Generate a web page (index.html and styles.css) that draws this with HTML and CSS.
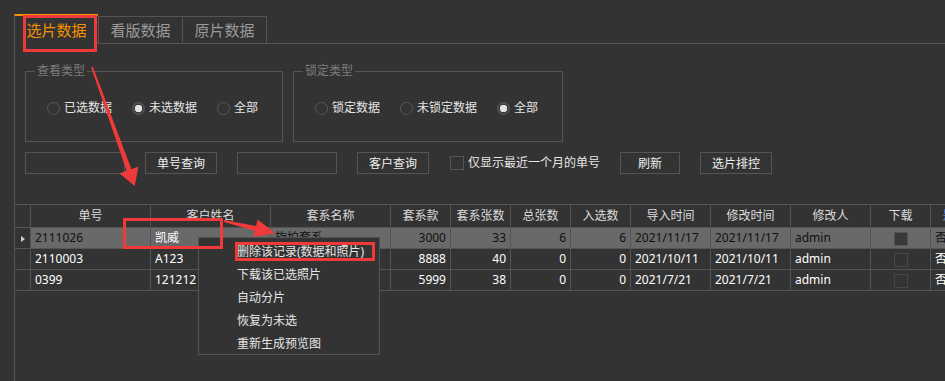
FILE: index.html
```html
<!DOCTYPE html>
<html lang="zh-CN">

<head>
    <meta charset="UTF-8">
    <title>选片数据</title>
    <link rel="stylesheet" href="styles.css">
</head>

<body>
    <div class="tabs">
        <div class="tab active">选片数据</div>
        <div class="tab">看版数据</div>
        <div class="tab last">原片数据</div>
        <div class="tab-fill"></div>
    </div>

    <div class="panel">
        <div class="groups">
            <div class="group g1">
                <div class="group-title">查看类型</div>
                <div class="radios">
                    <label class="radio"><span class="dot"></span>已选数据</label>
                    <label class="radio"><span class="dot on"></span>未选数据</label>
                    <label class="radio"><span class="dot"></span>全部</label>
                </div>
            </div>
            <div class="group g2">
                <div class="group-title">锁定类型</div>
                <div class="radios">
                    <label class="radio"><span class="dot"></span>锁定数据</label>
                    <label class="radio"><span class="dot"></span>未锁定数据</label>
                    <label class="radio"><span class="dot on"></span>全部</label>
                </div>
            </div>
        </div>

        <div class="controls">
            <input class="field" type="text">
            <button class="btn">单号查询</button>
            <input class="field" type="text">
            <button class="btn">客户查询</button>
            <label class="check"><span class="box"></span>仅显示最近一个月的单号</label>
            <button class="btn short">刷新</button>
            <button class="btn">选片排控</button>
        </div>

        <div class="grid-wrap">
            <table class="grid">
                <colgroup>
                    <col style="width:16px">
                    <col style="width:120px">
                    <col style="width:120px">
                    <col style="width:120px">
                    <col style="width:60px">
                    <col style="width:60px">
                    <col style="width:60px">
                    <col style="width:60px">
                    <col style="width:80px">
                    <col style="width:80px">
                    <col style="width:80px">
                    <col style="width:60px">
                    <col style="width:72px">
                </colgroup>
                <thead>
                    <tr>
                        <th></th>
                        <th>单号</th>
                        <th>客户姓名</th>
                        <th>套系名称</th>
                        <th>套系款</th>
                        <th>套系张数</th>
                        <th>总张数</th>
                        <th>入选数</th>
                        <th>导入时间</th>
                        <th>修改时间</th>
                        <th>修改人</th>
                        <th>下载</th>
                        <th class="blue">是否锁定</th>
                    </tr>
                </thead>
                <tbody>
                    <tr class="sel">
                        <td class="rowhead"><span class="marker"></span></td>
                        <td>2111026</td>
                        <td class="current">凯威</td>
                        <td>旋拍套系</td>
                        <td class="num">3000</td>
                        <td class="num">33</td>
                        <td class="num">6</td>
                        <td class="num">6</td>
                        <td>2021/11/17</td>
                        <td>2021/11/17</td>
                        <td>admin</td>
                        <td class="mid"><span class="cb filled"></span></td>
                        <td>否</td>
                    </tr>
                    <tr>
                        <td class="rowhead"></td>
                        <td>2110003</td>
                        <td>A123</td>
                        <td></td>
                        <td class="num">8888</td>
                        <td class="num">40</td>
                        <td class="num">0</td>
                        <td class="num">0</td>
                        <td>2021/10/11</td>
                        <td>2021/10/11</td>
                        <td>admin</td>
                        <td class="mid"><span class="cb"></span></td>
                        <td>否</td>
                    </tr>
                    <tr>
                        <td class="rowhead"></td>
                        <td>0399</td>
                        <td>121212</td>
                        <td></td>
                        <td class="num">5999</td>
                        <td class="num">38</td>
                        <td class="num">0</td>
                        <td class="num">0</td>
                        <td>2021/7/21</td>
                        <td>2021/7/21</td>
                        <td>admin</td>
                        <td class="mid"><span class="cb"></span></td>
                        <td>否</td>
                    </tr>
                </tbody>
            </table>
        </div>
    </div>

    <!-- right-click menu on the selected row -->
    <ul class="ctx-menu">
        <li>删除该记录(数据和照片)</li>
        <li>下载该已选照片</li>
        <li>自动分片</li>
        <li>恢复为未选</li>
        <li>重新生成预览图</li>
    </ul>

    <!-- red screenshot annotations -->
    <svg class="marks" width="945" height="381" viewBox="0 0 945 381">
        <g fill="none" stroke="#f03a3a" stroke-width="3">
            <rect x="24.5" y="16.5" width="71" height="34" />
            <rect x="124.5" y="219.5" width="97" height="28" />
            <rect x="236.5" y="243.5" width="137" height="16" />
        </g>
        <g fill="#f03a3a">
            <polygon points="92.9,66.7 131.4,169.2 138.4,166.6 134.7,186 119.6,173.4 126.6,170.8 91.1,67.3" />
            <polygon points="224.2,220 256.1,226 257.6,219.6 275,233 253.4,237.2 254.9,230.8 223.8,222" />
        </g>
    </svg>
</body>

</html>
```

FILE: styles.css
```css
html,
body {
    margin: 0;
    height: 100%;
}

body {
    background: #333333;
    color: #e6e6e6;
    font-family: 'Noto Sans', 'Noto Sans CJK SC', sans-serif;
    font-size: 12px;
    line-height: 16px;
    display: flex;
    flex-direction: column;
    overflow: hidden;
    position: relative;
}

/* Tabs */
.tabs {
    display: flex;
    align-items: flex-end;
    padding: 14px 0 0 14px;
}

.tab {
    box-sizing: border-box;
    width: 84px;
    height: 28px;
    border-top: 1px solid #555;
    border-left: 1px solid #555;
    border-bottom: 1px solid #555;
    color: #9a9a9a;
    font-size: 15px;
    line-height: 26px;
    text-align: center;
}

.tab.active {
    height: 30px;
    border-top: 2px solid #f39200;
    border-bottom: none;
    color: #f39200;
    line-height: 28px;
}

.tab.last {
    width: 85px;
    border-right: 1px solid #555;
}

.tab-fill {
    flex: 1;
    border-bottom: 1px solid #555;
}

/* Panel */
.panel {
    flex: 1;
    margin-left: 14px;
    border-left: 1px solid #555;
    display: flex;
    flex-direction: column;
    min-height: 0;
}

.groups {
    display: flex;
    gap: 10px;
    margin: 27px 0 0 10px;
}

.group {
    box-sizing: border-box;
    height: 71px;
    border: 1px solid #555;
}

.g1 {
    width: 258px;
}

.g2 {
    width: 270px;
}

.group-title {
    width: fit-content;
    margin: -9px 0 0 9px;
    padding: 0 2px;
    background: #333333;
    color: #7c7c7c;
}

.radios {
    display: flex;
    gap: 20px;
    margin-top: 21px;
    padding-left: 21px;
}

.radio {
    display: flex;
    align-items: center;
    gap: 4px;
}

.dot {
    box-sizing: border-box;
    width: 13px;
    height: 13px;
    border: 1px solid #575757;
    border-radius: 50%;
}

.dot.on {
    background: radial-gradient(circle, #e2e2e2 0 3.5px, #3a3a3a 4px 4.5px, #4a4a4a 5px);
}

/* Search row */
.controls {
    display: flex;
    align-items: center;
    gap: 20px;
    height: 22px;
    margin: 10px 0 0 10px;
}

.field {
    box-sizing: border-box;
    width: 100px;
    height: 22px;
    margin: 0;
    border: 1px solid #555;
    background: #333333;
}

.btn {
    box-sizing: border-box;
    width: 72px;
    height: 22px;
    margin: 0;
    padding: 0;
    border: 1px solid #555;
    background: #333333;
    color: #eeeeee;
    font-family: inherit;
    font-size: 12px;
}

.btn.short {
    width: 60px;
}

.check {
    display: flex;
    align-items: center;
    gap: 4px;
    margin-left: 1px;
}

.box {
    box-sizing: border-box;
    width: 14px;
    height: 14px;
    border: 1px solid #555;
}

/* Data grid */
.grid-wrap {
    flex: 1;
    margin-top: 30px;
    overflow: hidden;
}

.grid {
    table-layout: fixed;
    border-collapse: separate;
    border-spacing: 0;
    width: 988px;
    border-top: 1px solid #555;
}

.grid th,
.grid td {
    box-sizing: border-box;
    padding: 0 4px;
    border-right: 1px solid #555;
    border-bottom: 1px solid #555;
    white-space: nowrap;
    overflow: hidden;
}

.grid th {
    height: 23px;
    color: #dcdcdc;
    font-weight: normal;
    text-align: center;
}

.grid th.blue {
    color: #5a8fd8;
}

.grid td {
    height: 21px;
    color: #ffffff;
    text-align: left;
}

.grid td.num {
    text-align: right;
}

.grid td.mid {
    text-align: center;
    padding: 0;
}

.grid td.rowhead {
    padding: 0;
    text-align: center;
}

.sel td {
    background: #696969;
    color: #111111;
}

.sel td.rowhead {
    background: #333333;
}

.sel td.current {
    color: #ffffff;
}

.marker {
    display: inline-block;
    width: 0;
    height: 0;
    border-top: 3px solid transparent;
    border-bottom: 3px solid transparent;
    border-left: 4px solid #d0d0d0;
    vertical-align: middle;
}

.cb {
    display: inline-block;
    box-sizing: border-box;
    width: 14px;
    height: 14px;
    border: 1px solid #474747;
    vertical-align: middle;
}

.cb.filled {
    background: #383838;
    border-color: #555;
}

/* Context menu */
.ctx-menu {
    position: absolute;
    left: 198px;
    top: 237px;
    box-sizing: border-box;
    width: 182px;
    height: 118px;
    margin: 0;
    padding: 2px 0 0;
    list-style: none;
    background: #333333;
    border: 1px solid #555;
}

.ctx-menu li {
    height: 23px;
    line-height: 23px;
    padding-left: 38px;
    color: #e6e6e6;
}

.marks {
    position: absolute;
    left: 0;
    top: 0;
    pointer-events: none;
}
```
